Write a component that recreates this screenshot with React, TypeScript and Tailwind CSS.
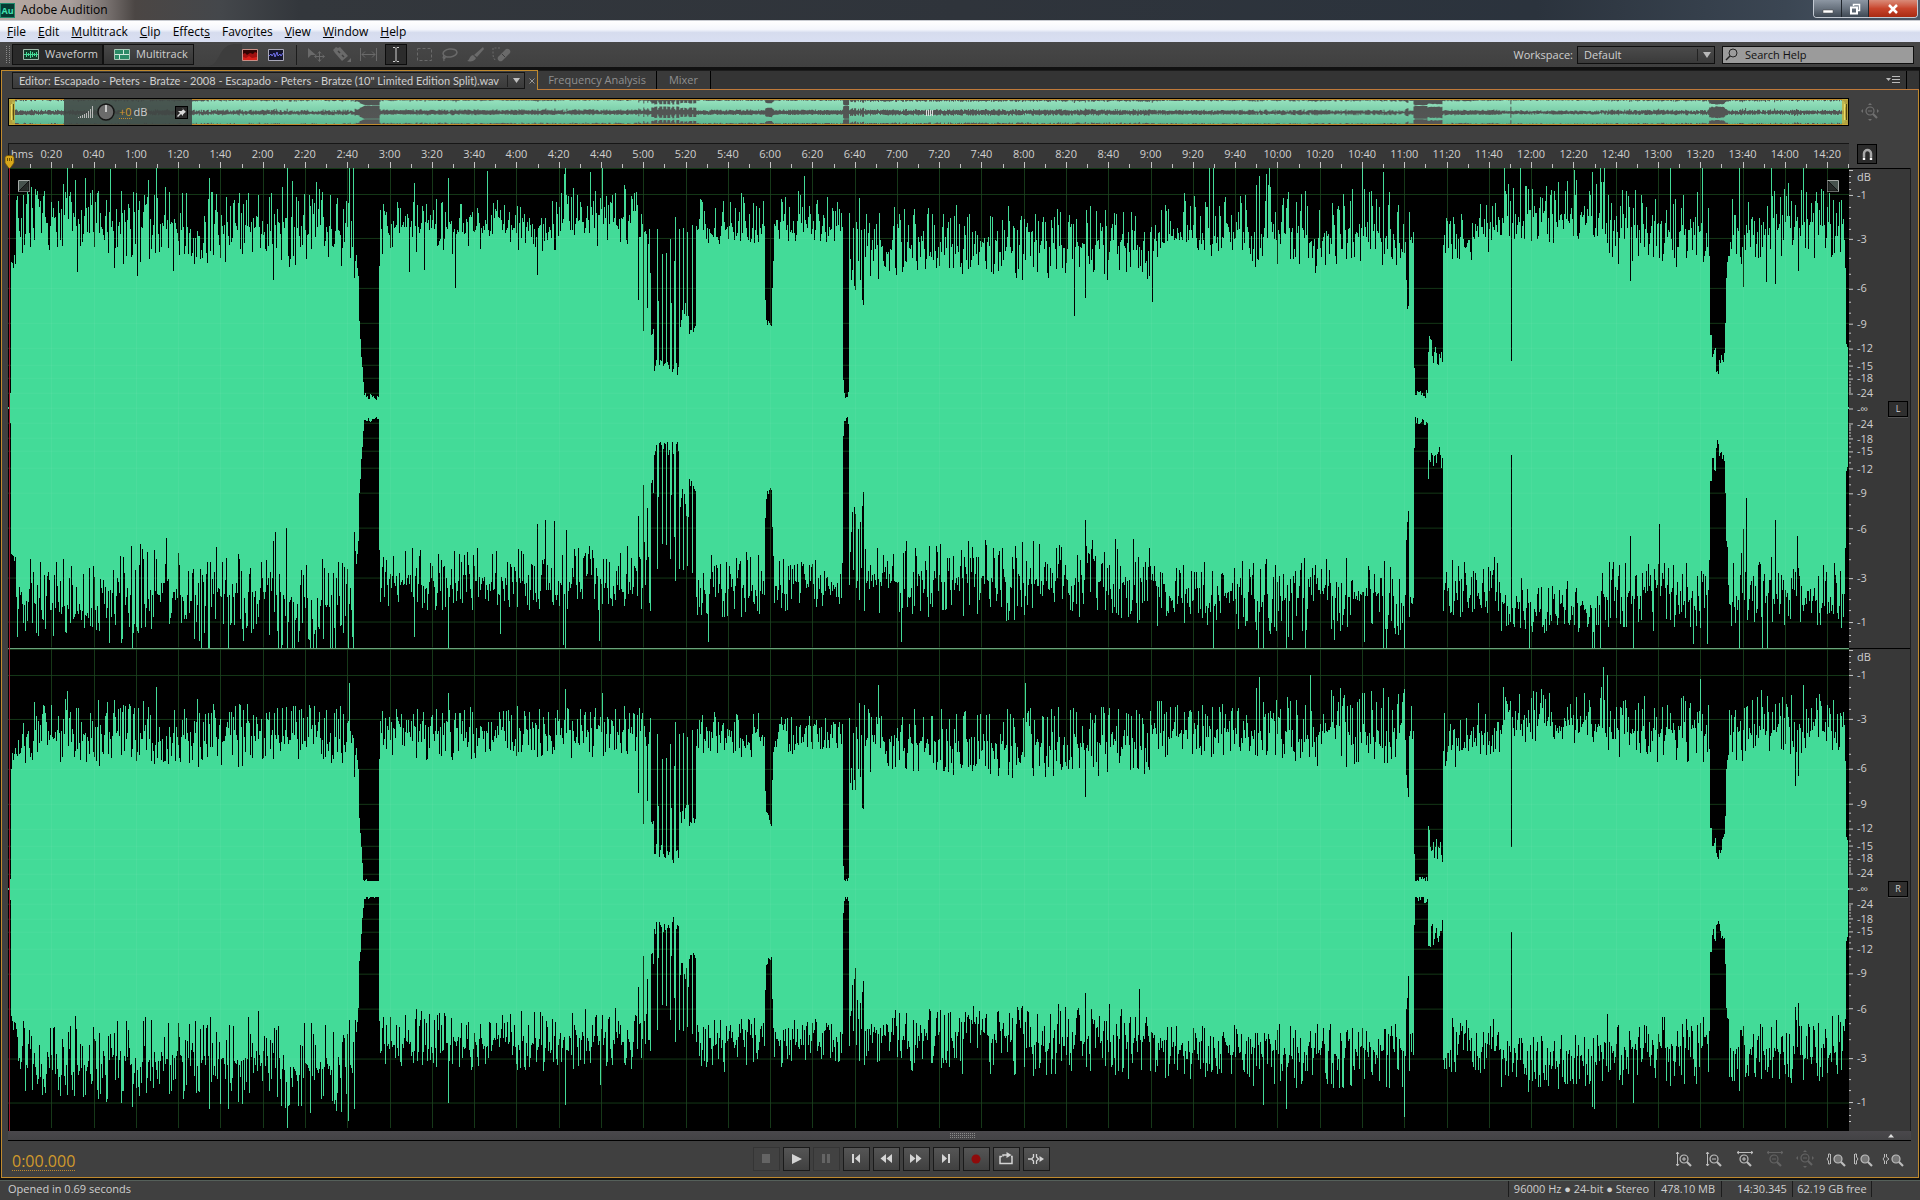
import { useState } from "react";
import type { ReactNode } from "react";

/* ---------- waveform data ---------- */

const COLS = 1841;
const ORIGIN = 8;
const HALF = 240;
const DURATION = 870.345;

type Segment = [from: number, to: number, base: number, peak: number, dip: number];
type Run = [from: number, to: number, start: number, end: number, jitter: number];

function random(seed: number) {
  let s = seed;
  return () => {
    s = (s + 0x6d2b79f5) | 0;
    let t = Math.imul(s ^ (s >>> 15), 1 | s);
    t = (t + Math.imul(t ^ (t >>> 7), 61 | t)) ^ t;
    return ((t ^ (t >>> 14)) >>> 0) / 4294967296;
  };
}

const sharedRandom = random(77);
const SHARED = Array.from({ length: COLS }, () => [sharedRandom(), sharedRandom()]);

/* Quiet passages, as distance in pixels from full scale. */
const QUIET: Run[] = [
  [9, 10, 225, 225, 0], [11, 15, 100, 90, 8],
  [354, 355, 112, 95, 6], [356, 358, 84, 110, 4], [359, 363, 155, 215, 4], [364, 378, 227, 231, 3], [379, 379, 98, 98, 0],
  [638, 638, 132, 132, 0], [643, 643, 163, 163, 0], [647, 647, 140, 140, 0],
  [651, 653, 165, 160, 6], [654, 679, 197, 203, 8], [680, 688, 152, 140, 12], [689, 695, 164, 160, 5],
  [765, 766, 130, 152, 3], [767, 771, 155, 162, 4], [772, 773, 120, 90, 5],
  [843, 843, 212, 212, 0], [844, 847, 226, 231, 3], [848, 848, 224, 224, 0],
  [850, 855, 105, 138, 18], [860, 863, 118, 148, 12],
  [1406, 1408, 110, 140, 6], [1414, 1414, 200, 200, 0], [1415, 1427, 228, 225, 5], [1428, 1442, 178, 192, 14],
  [1511, 1511, 193, 193, 0],
  [1709, 1709, 88, 88, 0], [1710, 1711, 167, 167, 0], [1712, 1715, 186, 180, 6], [1716, 1718, 203, 206, 4],
  [1719, 1724, 197, 186, 6], [1725, 1725, 155, 155, 0], [1726, 1727, 108, 98, 4],
  [1845, 1845, 100, 100, 0], [1846, 1847, 177, 180, 2],
];

/* Columns that stay loud inside the drum break. */
const HITS: [number, number][] = [
  [657, 61], [658, 133], [662, 86], [666, 85], [670, 71], [671, 135], [675, 49], [674, 93], [679, 61], [683, 60], [687, 64], [692, 57],
  [846, 229], [849, 45], [853, 60], [859, 30], [861, 62],
];

const LEFT_TOP: Segment[] = [
  [16, 95, 46, 16, 92], [96, 353, 60, 18, 102], [380, 560, 56, 28, 88], [561, 640, 52, 16, 82], [641, 653, 60, 30, 110],
  [696, 764, 58, 22, 78], [774, 842, 54, 20, 76], [849, 863, 62, 45, 120], [864, 1000, 76, 36, 114], [1001, 1150, 76, 36, 118],
  [1151, 1250, 60, 24, 90], [1251, 1413, 64, 12, 106], [1443, 1475, 70, 40, 100], [1476, 1500, 55, 20, 90],
  [1501, 1605, 45, 6, 78], [1606, 1708, 58, 14, 100], [1728, 1750, 62, 20, 100], [1751, 1845, 52, 10, 98],
];
const LEFT_BOTTOM: Segment[] = [
  [16, 95, 36, 4, 96], [96, 270, 50, 4, 110], [271, 353, 46, 0, 100], [380, 640, 62, 34, 104], [641, 653, 60, 30, 120],
  [696, 764, 58, 28, 96], [774, 842, 60, 32, 92], [849, 863, 70, 30, 130], [864, 1000, 66, 30, 112], [1001, 1155, 64, 22, 112],
  [1156, 1250, 50, 16, 90], [1251, 1413, 50, 6, 94], [1443, 1500, 54, 30, 96], [1501, 1600, 40, 12, 72],
  [1601, 1708, 52, 14, 100], [1728, 1845, 50, 14, 96],
];
const RIGHT_TOP: Segment[] = [
  [16, 95, 84, 46, 120], [96, 353, 86, 48, 122], [380, 640, 82, 54, 114], [641, 653, 86, 60, 125],
  [696, 764, 84, 62, 108], [774, 842, 84, 62, 106], [849, 863, 90, 60, 130], [864, 1000, 92, 54, 132], [1001, 1150, 94, 50, 132],
  [1151, 1250, 82, 46, 112], [1251, 1413, 82, 34, 120], [1443, 1475, 92, 62, 124], [1476, 1500, 80, 52, 112],
  [1501, 1605, 70, 32, 98], [1606, 1708, 82, 44, 116], [1728, 1750, 84, 48, 118], [1751, 1845, 76, 38, 112],
];
const RIGHT_BOTTOM: Segment[] = [
  [16, 95, 62, 26, 116], [96, 270, 66, 24, 122], [271, 353, 60, 10, 118], [380, 640, 86, 56, 124], [641, 653, 88, 60, 130],
  [696, 764, 84, 56, 112], [774, 842, 86, 60, 112], [849, 863, 90, 60, 140], [864, 1000, 92, 54, 126], [1001, 1155, 90, 48, 128],
  [1156, 1250, 76, 48, 108], [1251, 1413, 76, 36, 108], [1443, 1500, 80, 52, 116], [1501, 1605, 68, 34, 98],
  [1606, 1708, 80, 40, 118], [1728, 1845, 76, 40, 118],
];

const LEFT_TOP_SPIKES: [number, number][] = [
  [67, 0], [63, 16], [75, 12], [85, 10], [110, 1], [148, 12], [156, 0], [209, 10], [287, 0], [292, 13], [316, 14], [349, 0], [353, 0],
  [77, 104], [137, 108], [173, 103], [273, 112], [414, 15], [448, 10], [455, 120], [487, 3], [409, 104], [424, 102], [537, 107],
  [564, 6], [565, 0], [590, 4], [602, 0], [636, 24], [804, 8], [1074, 148], [1085, 130], [1152, 134], [1209, 0], [1213, 0],
  [1259, 8], [1266, 6], [1269, 0], [1362, 0], [1383, 4], [1407, 141], [1504, 0], [1520, 0], [1574, 2], [1592, 4], [1600, 0],
  [1604, 0], [1670, 0], [1702, 0], [1630, 113], [1739, 0], [1743, 119], [1771, 0], [1766, 114], [1775, 116], [1803, 0], [1798, 103],
];
const LEFT_BOTTOM_SPIKES: [number, number][] = [
  [132, 0], [166, 110], [201, 0], [208, 0], [209, 0], [228, 0], [275, 116], [273, 107], [286, 120], [278, 0], [281, 0], [287, 0], [292, 0],
  [294, 0], [310, 0], [313, 0], [316, 0], [330, 0], [332, 0], [335, 0], [348, 0], [353, 0], [414, 11], [448, 0], [500, 14],
  [537, 124], [545, 128], [554, 127], [563, 3], [565, 0], [566, 118], [599, 7], [708, 6], [901, 6], [1085, 128], [1213, 0], [1258, 0],
  [1263, 0], [1286, 0], [1305, 0], [1383, 0], [1386, 0], [1404, 0], [1529, 0], [1592, 0], [1594, 0], [1600, 0], [1633, 0], [1630, 112],
  [1659, 124], [1693, 4], [1707, 4], [1739, 0], [1743, 119], [1746, 150], [1762, 0], [1767, 0], [1775, 128], [1797, 112],
];
const RIGHT_TOP_SPIKES: [number, number][] = [
  [67, 42], [156, 38], [349, 34], [448, 44], [565, 40], [602, 44], [878, 36], [1025, 34], [1085, 148], [1259, 28], [1310, 26], [1404, 40],
  [1603, 18], [1607, 26], [1700, 30], [1803, 36], [1795, 137], [1798, 127],
];
const RIGHT_BOTTOM_SPIKES: [number, number][] = [
  [132, 22], [209, 20], [228, 20], [287, 0], [310, 16], [348, 8], [354, 20], [448, 26], [565, 24], [600, 44], [1085, 136], [1139, 140],
  [1263, 24], [1286, 20], [1404, 12], [1592, 22], [1594, 20], [1633, 26], [1795, 122], [1798, 126], [1739, 38],
];

function trace(segments: Segment[], spikes: [number, number][], seed: number, below: boolean, lift: number) {
  const rnd = random(seed);
  const depth = new Array<number>(COLS).fill(HALF - 1);
  for (const [from, to, base, peak, dip] of segments) {
    let drift = 0;
    for (let x = from; x <= to; x++) {
      drift = drift * 0.85 + (rnd() - 0.5) * 6;
      const own = rnd();
      const kind = rnd() < 0.55 ? SHARED[x - ORIGIN][0] : own;
      const force = rnd() * 0.7 + SHARED[x - ORIGIN][1] * 0.3;
      const level = base + drift;
      let d = level + (rnd() - 0.4) * 12;
      if (kind < 0.35) d = level + (dip - level) * Math.pow(force, 0.9);
      else if (kind < 0.66) d = level - (level - peak) * Math.pow(force, 0.9);
      depth[x - ORIGIN] = d;
    }
  }
  for (const [from, to, start, end, jitter] of QUIET) {
    for (let x = from; x <= to; x++) {
      const k = to === from ? 0 : (x - from) / (to - from);
      depth[x - ORIGIN] = Math.min(232, start + (end - start) * k + (rnd() - 0.5) * 2 * jitter + lift * (start > 190 ? 0.2 : 0.5));
    }
  }
  for (const [x, d] of HITS) depth[x - ORIGIN] = Math.min(230, d + lift + (below ? 18 : 0));
  for (const [x, d] of spikes) depth[x - ORIGIN] = d;
  return depth.map((d) => Math.max(0, Math.round(d)));
}

const LEFT = {
  top: trace(LEFT_TOP, LEFT_TOP_SPIKES, 11, false, 0),
  bottom: trace(LEFT_BOTTOM, LEFT_BOTTOM_SPIKES, 23, true, 0),
};
const RIGHT = {
  top: trace(RIGHT_TOP, RIGHT_TOP_SPIKES, 37, false, 24),
  bottom: trace(RIGHT_BOTTOM, RIGHT_BOTTOM_SPIKES, 53, true, 20),
};

type Channel = typeof LEFT;

function outline(channel: Channel, center: number, half: number) {
  const k = half / HALF;
  let d = `M0 ${center}`;
  for (let i = 0; i < COLS; i++) d += `V${+(center - (HALF - channel.top[i]) * k).toFixed(2)}H${i + 1}`;
  for (let i = COLS - 1; i >= 0; i--) d += `V${+(center + (HALF - channel.bottom[i]) * k).toFixed(2)}H${i}`;
  return d + "Z";
}

/* ---------- scales ---------- */

const timeX = (sec: number) => 1 + (sec / DURATION) * (COLS - 1);
const TIMES = Array.from({ length: 43 }, (_, i) => (i + 1) * 20);
const timeLabel = (s: number) => `${Math.floor(s / 60)}:${String(s % 60).padStart(2, "0")}`;
const MAJOR_DB = [1, 3, 6, 9, 12, 15, 18, 24];
const gain = (db: number) => Math.pow(10, -db / 20) * HALF;
const DB_LINES = [HALF, ...MAJOR_DB.flatMap((db) => [HALF - gain(db), HALF + gain(db)])];
const MINOR_DB = [0.25, 0.5, 0.75, 1.5, 2, 2.5, 4, 5, 7, 8, 10, 11, 13, 14, 16, 17, 19, 20, 21, 22, 23];
const MINOR_LINES = MINOR_DB.flatMap((db) => [HALF - gain(db), HALF + gain(db)]);

function ChannelWave({ channel, label }: { channel: Channel; label: string }) {
  return (
    <svg role="img" aria-label={label} viewBox="0 0 1841 480" preserveAspectRatio="none" shapeRendering="crispEdges" className="block min-h-0 w-full flex-1 basis-0">
      <Grid stroke="#0b2f0e" />
      <path d={outline(channel, HALF, HALF)} fill="#43db98" />
      <Grid stroke="rgba(255,255,255,0.05)" />
    </svg>
  );
}

function Grid({ stroke }: { stroke: string }) {
  return (
    <path
      d={TIMES.map((t) => `M${Math.round(timeX(t)) + 0.5} 0V480`).join("") + DB_LINES.map((y) => `M0 ${Math.round(y) + 0.5}H1841`).join("") + "M0 .5H1841"}
      stroke={stroke}
      fill="none"
    />
  );
}

function DbScale({ letter }: { letter: string }) {
  const labels = [
    ...MAJOR_DB.map((db) => ({ text: `-${db}`, y: HALF - gain(db) })),
    { text: "-∞", y: HALF },
    ...MAJOR_DB.map((db) => ({ text: `-${db}`, y: HALF + gain(db) })),
  ];
  return (
    <div className="relative min-h-0 flex-1 basis-0 border-t border-black">
      <svg viewBox="0 0 4 480" preserveAspectRatio="none" shapeRendering="crispEdges" className="absolute left-0 top-0 h-full w-1">
        <path d={[1, ...DB_LINES].map((y) => `M0 ${Math.round(y) + 0.5}h4`).join("") + MINOR_LINES.map((y) => `M0 ${Math.round(y) + 0.5}h2`).join("")} stroke="#c8c8c8" />
      </svg>
      <span className="absolute left-2 top-0.5 text-[11px] leading-3">dB</span>
      {labels.map((l, i) => (
        <span key={i} className="absolute left-2 -translate-y-1/2 text-[11px] leading-3" style={{ top: `${(l.y / 480) * 100}%` }}>
          {l.text}
        </span>
      ))}
      <button className="absolute right-0.5 top-1/2 h-4 w-5 -translate-y-1/2 border border-black bg-[#2f2f2f] text-[9px] leading-3 shadow-[0_1px_0_#555]">{letter}</button>
    </div>
  );
}

/* ---------- small pieces ---------- */

function Grip({ className = "" }: { className?: string }) {
  return (
    <svg viewBox="0 0 4 18" className={`h-[18px] w-1 shrink-0 ${className}`} shapeRendering="crispEdges">
      {Array.from({ length: 9 }, (_, i) => (
        <path key={i} d={`M0 ${i * 2 + 0.5}h1M3 ${i * 2 + 0.5}h1`} stroke="#8a8a8a" />
      ))}
    </svg>
  );
}

function Svg({ w, h, children, className = "" }: { w: number; h: number; children: ReactNode; className?: string }) {
  return (
    <svg width={w} height={h} viewBox={`0 0 ${w} ${h}`} fill="none" className={`shrink-0 ${className}`} aria-hidden="true">
      {children}
    </svg>
  );
}

const MENUS: [string, string, string][] = [
  ["", "F", "ile"], ["", "E", "dit"], ["", "M", "ultitrack"], ["", "C", "lip"], ["Effect", "s", ""],
  ["Favo", "r", "ites"], ["", "V", "iew"], ["", "W", "indow"], ["", "H", "elp"],
];

function TitleBar() {
  return (
    <header className="flex h-[21px] shrink-0 items-start justify-between border-b border-[#c9ccd2] bg-[linear-gradient(90deg,#b9a9a2_0px,#a89f9c_70px,#7b7472_105px,#4b4644_135px,#44474b_220px,#33373c_300px,#2f343b_50%,#2b333d_80%,#3b4653_93%,#4c5968_100%)]">
      <div className="flex items-center gap-1.5 pt-0.5">
        <span className="flex h-[15px] w-[15px] items-center justify-center border border-[#1f8a6c] bg-[#063b33] text-[9px] font-bold leading-none text-[#3fe0b0]">Au</span>
        <h1 className="text-xs leading-4 text-black">Adobe Audition</h1>
      </div>
      <div className="mr-0.5 flex h-[18px] overflow-hidden rounded-b border border-t-0 border-[#c3cad3]">
        <button aria-label="Minimize" className="flex w-7 items-center justify-center border-r border-[#20262d] bg-linear-to-b from-[#8d97a3] via-[#69737f] to-[#3e4853]">
          <Svg w={12} h={10}><path d="M1 6h10v3H1z" fill="#fff" stroke="#444" strokeWidth=".5" /></Svg>
        </button>
        <button aria-label="Restore" className="flex w-[27px] items-center justify-center border-r border-[#20262d] bg-linear-to-b from-[#8d97a3] via-[#69737f] to-[#3e4853]">
          <Svg w={12} h={12}>
            <path d="M4.5 3V1.5h6v6H9" stroke="#fff" strokeWidth="1.5" />
            <path d="M2 4.5h6v6H2z" stroke="#fff" strokeWidth="2" />
          </Svg>
        </button>
        <button aria-label="Close" className="flex w-12 items-center justify-center bg-linear-to-b from-[#d98a78] via-[#c8452c] to-[#a82a12]">
          <Svg w={12} h={10}><path d="M2 1l8 8M10 1L2 9" stroke="#fff" strokeWidth="2.5" /></Svg>
        </button>
      </div>
    </header>
  );
}

function MenuBar() {
  return (
    <nav className="flex h-[21px] shrink-0 items-center bg-[linear-gradient(180deg,#ffffff_0%,#f4f6fc_40%,#d6dcee_55%,#d9dff2_100%)] pl-px text-xs text-black">
      {MENUS.map(([a, u, b]) => (
        <button key={a + u + b} className="px-1.5 leading-4">
          {a}<span className="underline">{u}</span>{b}
        </button>
      ))}
    </nav>
  );
}

function ToolBar({ view, setView }: { view: string; setView: (v: string) => void }) {
  const viewClass = (v: string) =>
    `flex h-[21px] w-[91px] items-center gap-1.5 border border-[#111] pl-2.5 text-[11px] ${view === v ? "bg-[#2a2a2a]" : "bg-linear-to-b from-[#484848] to-[#363636]"}`;
  return (
    <div className="flex h-[25px] shrink-0 items-center justify-between bg-linear-to-b from-[#474747] to-[#404040] px-1.5">
      <div className="flex items-center">
        <Grip />
        <div className="ml-0.5 flex">
          <button className={viewClass("waveform")} onClick={() => setView("waveform")}>
            <Svg w={16} h={11}>
              <path d="M.5 .5h15v10H.5z" fill="#123c2a" stroke="#9fb8aa" />
              <path d="M1 5.5h14M3.5 3v5M5.500 4v3M7.500 2v7M9.500 3v5M11.500 4v3M13.500 3v5" stroke="#45dd99" />
            </Svg>
            Waveform
          </button>
          <button className={viewClass("multitrack")} onClick={() => setView("multitrack")}>
            <Svg w={16} h={11}>
              <path d="M.5 .5h15v10H.5z" fill="#2b8a66" stroke="#a8cbb9" />
              <path d="M1 5.500h14M9.500 1v4M5.500 6v4" stroke="#cfe8dc" />
            </Svg>
            Multitrack
          </button>
        </div>
        <Svg w={34} h={22} className="ml-3.5"><path d="M0 22C12 22 10 1 26 0h8v22z" fill="#3d3d3d" /></Svg>
        <button aria-label="Show spectral frequency display">
          <Svg w={16} h={12}>
            <path d="M.5 .5h15v11H.5z" fill="#a01010" stroke="#c98f86" />
            <path d="M1 1h14v3l-2-1-2 2-3-1-3 2-2-2-2 1z" fill="#300404" />
            <path d="M1 11V8l3 1 3-2 3 2 5-1v3z" fill="#d8201a" />
          </Svg>
        </button>
        <button aria-label="Show spectral pitch display" className="ml-2.5">
          <Svg w={16} h={12}>
            <path d="M.5 .5h15v11H.5z" fill="#14142c" stroke="#a9a9b8" />
            <path d="M1 7l2-2 1 2 2-3 1 4 2-5 1 4 2-2 1 2 2-3" stroke="#6f6fe8" />
          </Svg>
        </button>
        <span className="ml-3 h-5 w-px bg-[#1c1c1c]" />
        <div className="ml-2.5 flex items-center gap-[7px] text-[#6a6a6a]">
          <button aria-label="Move tool">
            <Svg w={18} h={15}>
              <path d="M1 1v10l3-3h5z" fill="currentColor" />
              <path d="M12.500 5v9M8 9.500h9M11 6.500l1.500-2 1.500 2M11 12.500l1.500 2 1.500-2M9.500 8l-2 1.500 2 1.500M15.500 8l2 1.500-2 1.500" stroke="currentColor" />
            </Svg>
          </button>
          <button aria-label="Razor tool">
            <Svg w={20} h={17}>
              <path d="M1 4l3-3 2 1 2-1 8 9-6 5-7-8z" fill="currentColor" />
              <path d="M6 5l2 2M10 9l2 2" stroke="#3f3f3f" strokeWidth="1.500" />
              <path d="M19 12v4h-4z" fill="currentColor" />
            </Svg>
          </button>
          <button aria-label="Slip tool">
            <Svg w={19} h={13}><path d="M1.500 0v13M17.500 0v13M3 6.500h13M6 3.500l-3 3 3 3M13 3.500l3 3-3 3" stroke="currentColor" /></Svg>
          </button>
          <button aria-label="Time selection tool" className="flex h-[21px] w-[22px] items-center justify-center border border-[#0c0c0c] bg-[#2c2c2c] text-[#d0d0d0]">
            <Svg w={8} h={15}><path d="M1 .5h2l1 1 1-1h2M1 14.500h2l1-1 1 1h2M4 1.500v12" stroke="currentColor" /></Svg>
          </button>
          <button aria-label="Marquee selection tool" className="ml-[3px]">
            <Svg w={15} h={13}><path d="M.5 .5h14v12H.5z" stroke="currentColor" strokeDasharray="3 2" /></Svg>
          </button>
          <button aria-label="Lasso selection tool" className="ml-0.5">
            <Svg w={17} h={14}>
              <ellipse cx="9" cy="5" rx="7" ry="4" stroke="currentColor" strokeWidth="1.500" transform="rotate(-8 9 5)" />
              <path d="M3 8c-2 2 0 3 1 2s-2-1-1 3" stroke="currentColor" strokeWidth="1.300" />
            </Svg>
          </button>
          <button aria-label="Paintbrush selection tool" className="ml-0.5">
            <Svg w={17} h={15}><path d="M16 0l1 2-7 8-3-2zM6 8l3 3c-1 3-5 4-9 3 3-1 2-5 6-6z" fill="currentColor" /></Svg>
          </button>
          <button aria-label="Spot healing brush tool">
            <Svg w={20} h={16}>
              <path d="M8 9l7-7a3 3 0 0 1 4 4l-8 8a3 3 0 0 1-4-4z" fill="currentColor" />
              <path d="M11 7l3 3" stroke="#3f3f3f" />
              <path d="M9 1H2v6c0 3 1 5 3 7" stroke="currentColor" strokeDasharray="2 1.500" />
            </Svg>
          </button>
        </div>
      </div>
      <div className="flex items-center text-[11px]">
        <label htmlFor="workspace" className="mr-1 leading-4">Workspace:</label>
        <span className="relative flex">
          <select id="workspace" className="h-[18px] w-[138px] appearance-none border border-[#0f0f0f] bg-linear-to-b from-[#4b4b4b] to-[#3a3a3a] pl-1.5 text-[11px] leading-4 text-[#d0d0d0]">
            <option>Default</option>
          </select>
          <span className="pointer-events-none absolute inset-y-[3px] right-0 flex w-[18px] items-center justify-center border-l border-[#222]">
            <Svg w={8} h={6}><path d="M0 0h8L4 6z" fill="#b8b8b8" /></Svg>
          </span>
        </span>
        <label className="ml-[7px] flex h-[18px] w-48 items-center border border-[#0f0f0f] bg-[#9b9b9b] pl-0.5">
          <Svg w={13} h={13}><circle cx="8" cy="5" r="4" stroke="#222" /><path d="M5 8l-4 4" stroke="#222" strokeWidth="1.500" /></Svg>
          <input aria-label="Search Help" placeholder="Search Help" className="ml-[7px] w-full bg-transparent text-[11px] leading-4 text-black outline-none placeholder:text-[#111]" />
        </label>
      </div>
    </div>
  );
}

function TabRow() {
  return (
    <div className="flex h-5 shrink-0 items-stretch text-[11px]">
      <div className="flex w-[537px] shrink-0 items-center border-t border-r border-l border-[#c08a2e] bg-[#404040] pl-[3px]">
        <Grip className="!h-3" />
        <button className="ml-[3px] flex h-[17px] min-w-0 flex-1 items-center justify-between border border-[#151515] bg-linear-to-b from-[#494949] to-[#3a3a3a] pl-1.5">
          <span className="whitespace-nowrap font-['Lato','Open_Sans',sans-serif] leading-4">Editor: Escapado - Peters - Bratze - 2008 - Escapado - Peters - Bratze (10" Limited Edition Split).wav</span>
          <span className="flex h-3 w-[17px] shrink-0 items-center justify-center border-l border-[#222]">
            <Svg w={7} h={5}><path d="M0 0h7L3.500 5z" fill="#c0c0c0" /></Svg>
          </span>
        </button>
        <button aria-label="Close tab" className="mr-0.5 ml-1"><Svg w={6} h={6}><path d="M.5 .5l5 5M5.500 .5l-5 5" stroke="#999" /></Svg></button>
      </div>
      <div className="flex min-w-0 flex-1 justify-between border-t border-b border-t-[#1c1c1c] border-b-[#c07a3a] bg-[#343434] text-[#8f8f8f]">
        <div className="flex">
          <button className="w-[119px] border-r border-black bg-[#3a3a3a] text-center leading-4">Frequency Analysis</button>
          <button className="w-[54px] border-r border-black bg-[#3a3a3a] text-center leading-4">Mixer</button>
        </div>
        <div className="flex items-center">
          <button aria-label="Panel menu" className="mr-1.5">
            <Svg w={14} h={9}><path d="M0 2h5L2.500 5z" fill="#bbb" /><path d="M6 .5h8M6 3.500h8M6 6.500h8" stroke="#bbb" /></Svg>
          </button>
          <span className="flex h-full items-center border-l border-black px-1"><Grip className="!h-3" /></span>
        </div>
      </div>
    </div>
  );
}

function Handle({ className }: { className: string }) {
  return (
    <span className={`absolute inset-y-0 flex w-1.5 items-center justify-center gap-px bg-[#c9b23a]/80 ${className}`}>
      <i className="h-4 w-px bg-[#f0dc60]" />
      <i className="h-4 w-px bg-[#5a4c10]" />
    </span>
  );
}

function Overview() {
  return (
    <div className="flex pt-2">
      <div className="relative h-7 min-w-0 flex-1 border border-black">
        <div className="h-full border-y border-[#c08a2e] bg-linear-to-b from-[#4f5452] to-[#565656]">
          <svg role="img" aria-label="File overview" viewBox="0 0 1841 24" preserveAspectRatio="none" className="block h-full w-full">
            <defs>
              <linearGradient id="overview" x1="0" y1="0" x2="0" y2="24" gradientUnits="userSpaceOnUse">
                <stop offset="0" stopColor="#96e2be" />
                <stop offset="1" stopColor="#5cb892" />
              </linearGradient>
            </defs>
            <path d={outline(LEFT, 5.5, 6.5)} fill="url(#overview)" />
            <path d={outline(RIGHT, 19, 7)} fill="url(#overview)" />
            <path d="M918.500 10v6M920.500 10v6M922.500 10v6M924.500 10v6" stroke="#ddd" shapeRendering="crispEdges" />
          </svg>
        </div>
        <Handle className="left-0" />
        <Handle className="right-0" />
        <div className="absolute inset-y-0 left-[55px] flex w-32 items-center bg-[#404745]/90 pl-1 text-[11px]">
          <Grip className="!h-2.5" />
          <Svg w={16} h={14} className="ml-1.5">
            <path d="M.5 13v-1M2.500 13v-2M4.500 13v-3M6.500 13v-4M8.500 13V8M10.500 13V6M12.500 13V4M14.500 13V1" stroke="#b8b8b8" />
          </Svg>
          <Svg w={18} h={18} className="ml-[3px]">
            <circle cx="9" cy="9" r="8" fill="#6b6b6b" stroke="#161616" strokeWidth="1.500" />
            <path d="M9 9V2" stroke="#e8e8e8" strokeWidth="1.500" />
          </Svg>
          <span className="ml-1 border-b border-dotted border-[#c08a2e] leading-[13px] text-[#d09a2c]">+0</span>
          <span className="ml-0.5">dB</span>
          <button aria-label="Pin" className="mr-1 ml-auto flex h-[13px] w-[13px] items-center justify-center border border-black bg-[#2a2a2a]">
            <Svg w={9} h={9}><path d="M5 0l4 4-1 .5-2 2 0 1.500-2-2-3 3-1-1 3-3-2-2H4.500l2-2z" fill="#d8d8d8" /></Svg>
          </button>
        </div>
      </div>
      <div className="flex w-[69px] items-center pl-3">
        <button aria-label="Zoom out full" className="text-[#707070]"><ZoomAround /></button>
      </div>
    </div>
  );
}

function TimeRuler() {
  return (
    <div className="flex">
      <div className="relative flex h-[25px] min-w-0 flex-1 flex-col justify-between border-t border-l border-[#161616] bg-[#373737]">
        <div className="flex overflow-hidden pt-0.5 text-[11px] leading-4">
          <span className="flex w-[1.15%] shrink-0 pl-0.5">hms</span>
          {TIMES.map((t) => (
            <span key={t} className="flex w-[2.298%] shrink-0 justify-center">{timeLabel(t)}</span>
          ))}
        </div>
        <svg viewBox="0 0 1840 6" preserveAspectRatio="none" shapeRendering="crispEdges" className="absolute inset-x-0 bottom-0 h-1.5 w-full">
          <path
            d={Array.from({ length: 88 }, (_, i) => `M${Math.round(timeX(i * 10)) - 0.5} ${i % 2 ? 2 : 0}V6`).join("")}
            stroke="#c4c4c4"
          />
        </svg>
        <Svg w={11} h={14} className="absolute -bottom-px -left-[5px]">
          <path d="M1 2l2-1.500h5L10 2v6l-4 5.500h-1L1 8z" fill="#d8a81c" stroke="#6e5208" strokeWidth=".8" />
          <path d="M3.500 3v3M5.500 3v3M7.500 3v3" stroke="#6b5006" />
        </Svg>
      </div>
      <div className="w-[69px] pt-px pl-2">
        <button aria-label="Toggle snapping" className="flex h-5 w-5 items-center justify-center border border-black bg-[#2b2b2b]">
          <Svg w={11} h={12}>
            <path d="M2 9V5.500a3.500 3.500 0 0 1 7 0V9" stroke="#a8a8a8" strokeWidth="2.500" />
            <path d="M.8 9.500h2.400V12H.8zM7.800 9.500h2.400V12H7.800z" fill="#fff" />
          </Svg>
        </button>
      </div>
    </div>
  );
}

function FadeHandle({ d, className }: { d: string; className: string }) {
  return (
    <button aria-label="Fade" className={`absolute ${className}`}>
      <Svg w={12} h={12}>
        <path d="M.5 .5h11v11H.5z" fill="#52605a" fillOpacity=".85" stroke="#a5aaa7" />
        <path d={d} fill="#111" fillOpacity=".6" stroke="#0a0a0a" strokeWidth=".8" />
      </Svg>
    </button>
  );
}

/* ---------- transport ---------- */

const TRANSPORT: { label: string; off?: boolean; icon: ReactNode }[] = [
  { label: "Stop", off: true, icon: <path d="M4 2h8v9H4z" fill="#646464" /> },
  { label: "Play", icon: <path d="M4 2l10 5-10 5z" fill="#d4d4d4" /> },
  { label: "Pause", off: true, icon: <path d="M4 2h3v9H4zM9 2h3v9H9z" fill="#646464" /> },
  { label: "Previous", icon: <path d="M4 2h2v9H4zM12 2v9L7 6.500z" fill="#d4d4d4" /> },
  { label: "Rewind", icon: <path d="M8 2v9L2.500 6.500zM14 2v9L8.500 6.500z" fill="#d4d4d4" /> },
  { label: "Fast forward", icon: <path d="M2 2v9l5.500-4.500zM8 2v9l5.500-4.500z" fill="#d4d4d4" /> },
  { label: "Next", icon: <path d="M4 2v9l5-4.500zM10 2h2v9h-2z" fill="#d4d4d4" /> },
  { label: "Record", icon: <circle cx="8" cy="7" r="4.500" fill="#8f0b0b" /> },
  { label: "Loop playback", icon: <><path d="M4 4.500H2v7h12v-7h-1M5 4.500V3h4" stroke="#d4d4d4" strokeWidth="1.500" /><path d="M8.500 0v6l5-3z" fill="#d4d4d4" /></> },
  { label: "Skip selection", icon: <><path d="M0 7h3M5.500 2v3L3.500 7l2 2v3M8.500 2v3l2 2-2 2v3" stroke="#d4d4d4" strokeWidth="1.300" /><path d="M11.500 4v6l4.500-3z" fill="#d4d4d4" /></> },
];

function Lens({ sign, x = 7, fill }: { sign?: "plus" | "minus"; x?: number; fill?: string }) {
  return (
    <g stroke="currentColor">
      <circle cx={x + 2} cy="8" r="4" fill={fill ?? "none"} strokeWidth="1.200" />
      <path d={`M${x + 5} 11l4 4`} strokeWidth="2.200" />
      {sign && <path d={`M${x} 8h4`} />}
      {sign === "plus" && <path d={`M${x + 2} 6v4`} />}
    </g>
  );
}

function ZoomAround() {
  return (
    <Svg w={18} h={18}>
      <Lens sign="minus" x={7} />
      <path d="M7 2l2-2 2 2zM7 16l2 2 2-2zM2 6L0 8l2 2zM16 6l2 2-2 2z" fill="currentColor" />
    </Svg>
  );
}

const vertical = <path d="M1.500 1v14M0 3l1.500-2L3 3M0 13l1.500 2L3 13" stroke="currentColor" />;
const horizontal = <path d="M1 1.500h16M3 0L1 1.500 3 3M15 0l2 1.500L15 3" stroke="currentColor" />;

const ZOOMS: { label: string; off?: boolean; icon: ReactNode }[] = [
  { label: "Zoom in amplitude", icon: <Svg w={18} h={17}>{vertical}<Lens sign="plus" x={6} /></Svg> },
  { label: "Zoom out amplitude", icon: <Svg w={18} h={17}>{vertical}<Lens sign="minus" x={6} /></Svg> },
  { label: "Zoom in time", icon: <Svg w={18} h={17}>{horizontal}<Lens sign="plus" x={6} /></Svg> },
  { label: "Zoom out time", off: true, icon: <Svg w={18} h={17}>{horizontal}<Lens sign="minus" x={6} /></Svg> },
  { label: "Zoom out full", off: true, icon: <ZoomAround /> },
  { label: "Zoom in at in point", icon: <Svg w={20} h={17}><path d="M4 3H2.500v3L1 8l1.500 2v3H4M4.500 3v10" stroke="currentColor" /><Lens x={10} fill="#777" /></Svg> },
  { label: "Zoom in at out point", icon: <Svg w={20} h={17}><path d="M.5 3v10M1 3h1.500v3L4 8l-1.500 2v3H1" stroke="currentColor" /><Lens x={9} fill="#777" /></Svg> },
  { label: "Zoom to selection", icon: <Svg w={22} h={17}><path d="M2.500 3v3L1 8l1.500 2v3M4.500 3v3L7 8l-2.500 2v3" stroke="currentColor" /><Lens x={12} fill="#777" /></Svg> },
];

function Transport() {
  return (
    <div className="grid h-9 shrink-0 grid-cols-[1fr_auto_1fr] items-center">
      <div className="pt-1 pl-1">
        <button className="border-b border-dotted border-[#c08a2e] text-base leading-[18px] text-[#d09a2c]">0:00.000</button>
      </div>
      <div className="flex gap-[3px] pr-[124px]">
        {TRANSPORT.map((b) => (
          <button
            key={b.label}
            aria-label={b.label}
            className={`flex h-6 w-[27px] items-center justify-center border ${b.off ? "border-[#353535] bg-[#424242]" : "border-[#1a1a1a] bg-linear-to-b from-[#555555] to-[#404040]"}`}
          >
            <Svg w={16} h={14}>{b.icon}</Svg>
          </button>
        ))}
      </div>
      <div className="flex items-center justify-end gap-3 pr-[18px] text-[#bdbdbd]">
        {ZOOMS.map((z, i) => (
          <button key={i} aria-label={z.label} className={z.off ? "text-[#636363]" : i > 4 ? "-mr-1" : ""}>{z.icon}</button>
        ))}
      </div>
    </div>
  );
}

function StatusBar() {
  return (
    <footer className="flex h-5 shrink-0 items-start justify-between border-t border-[#55605a] bg-[#404040] pl-2 text-[11px] leading-4">
      <span>Opened in 0.69 seconds</span>
      <div className="mr-12 flex [&>span]:border-l [&>span]:border-[#1c1c1c] [&>span]:text-center [&>span]:whitespace-nowrap">
        <span className="w-[146px]">96000 Hz ● 24-bit ● Stereo</span>
        <span className="w-[67px]">478.10 MB</span>
        <span className="w-[71px] pl-2.5">14:30.345</span>
        <span className="w-20 border-r">62.19 GB free</span>
      </div>
    </footer>
  );
}

export default function App() {
  const [view, setView] = useState("waveform");
  return (
    <div className="flex h-screen min-h-[600px] flex-col bg-[#111] font-['Open_Sans','Noto_Sans',sans-serif] text-[#cfcfcf]">
      <TitleBar />
      <MenuBar />
      <ToolBar view={view} setView={setView} />
      <main className="mx-px mt-[3px] mb-0.5 flex min-h-0 flex-1 flex-col">
        <TabRow />
        <section className="flex min-h-0 flex-1 flex-col border-x border-b border-[#c08a2e] bg-[#404040] pl-1.5">
          <Overview />
          <div className="mt-[17px]"><TimeRuler /></div>
          <div className="flex min-h-0 flex-1">
            <div className="relative flex min-w-0 flex-1 flex-col bg-black pb-[3px]">
              <ChannelWave channel={LEFT} label="Left channel waveform" />
              <div className="h-px bg-[#6aa37c]" />
              <ChannelWave channel={RIGHT} label="Right channel waveform" />
              <FadeHandle className="top-3 left-2.5" d="M1 11L11 1v10z" />
              <FadeHandle className="top-3 right-2.5" d="M1 1l10 10H1z" />
              <span className="absolute inset-y-0 left-px w-px bg-[#a01830]" />
            </div>
            <div className="mr-[7px] flex w-[62px] flex-col border-r border-[#1c1c1c] bg-[#383838] pb-[3px]">
              <DbScale letter="L" />
              <DbScale letter="R" />
            </div>
          </div>
          <div className="mr-[7px] flex h-2.5 shrink-0 items-center justify-between border-b border-black bg-linear-to-b from-[#4a484c] to-[#434345]">
            <span className="w-7" />
            <Svg w={25} h={5}>
              <path d="M0 .5h25M0 2.500h25M0 4.500h25" stroke="#8a8a8a" strokeDasharray="1 1" shapeRendering="crispEdges" />
            </Svg>
            <Svg w={6} h={4} className="mr-[17px]"><path d="M0 3.500L3 0l3 3.500z" fill="#ddd" /></Svg>
          </div>
          <Transport />
        </section>
      </main>
      <StatusBar />
    </div>
  );
}
